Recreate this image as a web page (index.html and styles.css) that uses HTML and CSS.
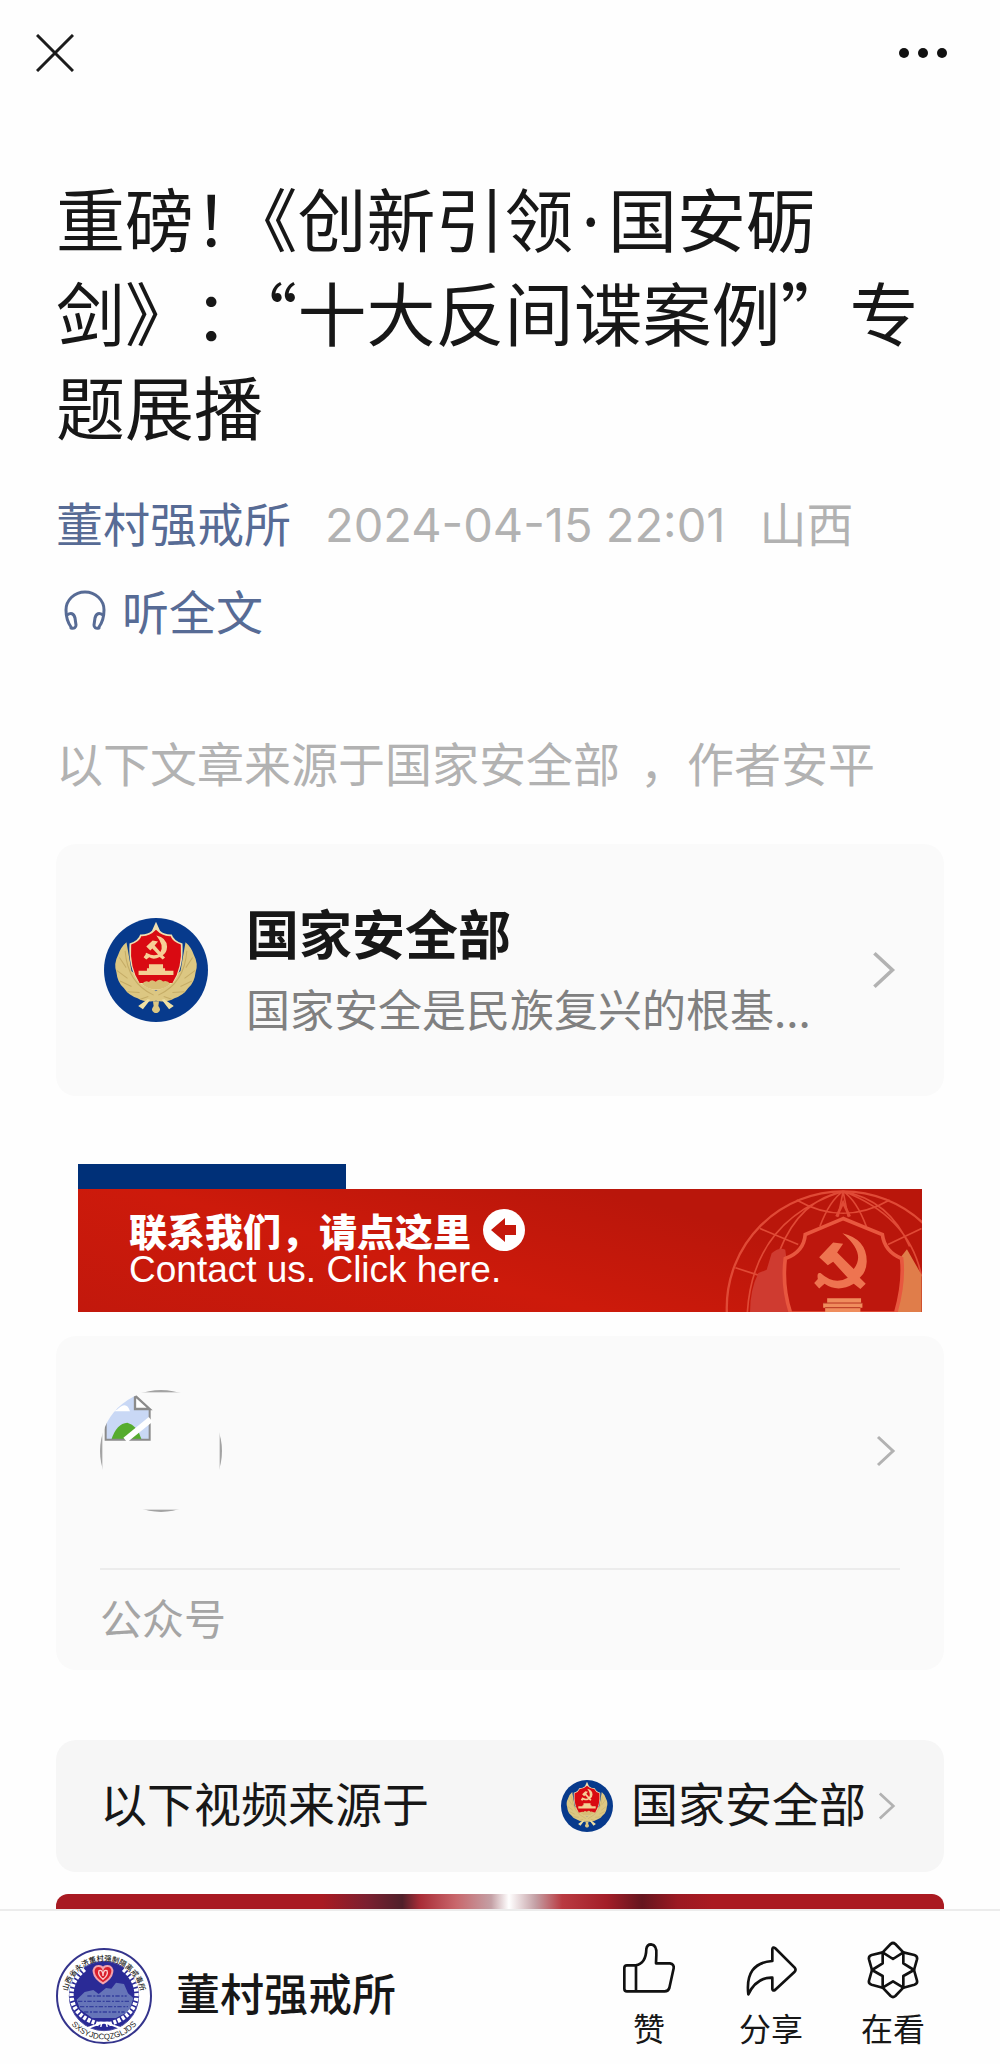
FILE: index.html
```html
<!DOCTYPE html>
<html lang="zh-CN">
<head>
<meta charset="utf-8">
<meta name="viewport" content="width=device-width, initial-scale=1">
<title>“十大反间谍案例”专题展播</title>
<link rel="stylesheet" href="styles.css">
</head>
<body>
<svg class="defs" aria-hidden="true">
  <defs>
    <path id="sickle" d="M198 94 Q229 100 230 128 Q229 147 217 153 L224 160 L217 166 L208 158 Q190 168 177 159 L168 166 L160 159 L166 151 Q166 143 171 147 Q187 157 203 151 L186 133 L180 139 L168 127 L187 109 L203 112 L193 124 L210 143 Q222 124 198 94Z"/>
    <symbol id="emblem" viewBox="42 42 310 310">
      <circle cx="197" cy="197" r="155" fill="#073a8c"/>
      <path d="M109 114 Q92 128 84 152 Q70 178 79 204 Q82 235 101 251 Q116 274 142 281 Q165 295 197 289 Q229 295 252 281 Q278 274 293 251 Q312 235 315 204 Q324 178 310 152 Q302 128 285 114 L270 200 L197 260 L124 200Z" fill="#dcc782"/>
      <path d="M88 160 L108 190 M80 198 L112 222 M90 230 L124 246 M112 262 L148 264 M150 284 L174 276 M306 160 L286 190 M314 198 L282 222 M304 230 L270 246 M282 262 L246 264 M244 284 L220 276 M105 140 Q112 236 190 272 M289 140 Q282 236 204 272" fill="none" stroke="#c5ac66" stroke-width="3"/>
      <path d="M180 286 L158 314 L144 304 L172 284Z M214 286 L236 314 L250 304 L222 284Z" fill="#efe0a4"/>
      <path d="M188 290 H206 L204 304 Q214 316 204 323 Q197 328 190 323 Q180 316 190 304Z" fill="#dcc782"/>
      <path d="M197 53 L209 80 Q222 92 244 91 Q250 110 276 118 Q280 190 250 232 Q230 250 197 258 Q164 250 144 232 Q114 190 118 118 Q144 110 150 91 Q172 92 185 80Z" fill="#f1dfb0"/>
      <path d="M197 77 Q216 97 240 96 Q248 115 271 121 Q276 190 246 236 H148 Q118 190 123 121 Q146 115 154 96 Q178 97 197 77Z" fill="#d90a12"/>
      <use href="#sickle" fill="#f7cf96"/>
      <path d="M176 180 H218 V192 H224 V199 H249 V212 H145 V199 H170 V192 H176Z" fill="#f3cf93"/>
      <path d="M155 239 Q165 226 176 233 Q184 222 196 232 Q208 220 218 231 Q230 226 240 239 Q220 256 197 255 Q174 256 155 239Z" fill="#d8bd75"/>
    </symbol>
    <symbol id="chevron" viewBox="0 0 20 32">
      <path d="M2 2 L17 16 L2 30" fill="none" stroke="#b2b2b2" stroke-width="3"/>
    </symbol>
  </defs>
</svg>

<div class="app">
  <header class="topbar">
    <button class="icon-btn" type="button" aria-label="关闭">
      <svg width="38" height="38" viewBox="0 0 38 38"><path d="M1 1 L37 37 M37 1 L1 37" stroke="#1c1c1c" stroke-width="3"/></svg>
    </button>
    <button class="icon-btn" type="button" aria-label="更多">
      <svg width="50" height="12" viewBox="0 0 50 12" fill="#111"><circle cx="6" cy="6" r="5"/><circle cx="25" cy="6" r="5"/><circle cx="44" cy="6" r="5"/></svg>
    </button>
  </header>

  <main class="article">
    <h1 class="title">重磅！<span class="half">《</span>创新引领<span class="dot">·</span>国安砺剑》：<span class="half">“</span>十大反间谍案例”专题展播</h1>

    <div class="meta">
      <a class="account" href="#account">董村强戒所</a>
      <time class="date" datetime="2024-04-15T22:01">2024-04-15 22:01</time>
      <span>山西</span>
    </div>

    <button class="listen" type="button">
      <svg width="42" height="42" viewBox="0 0 42 42" fill="none" stroke="#576b95" stroke-width="3" stroke-linecap="round" stroke-linejoin="round">
        <path d="M7 38 Q2 31 2 21 A19 18 0 0 1 40 21 Q40 31 35 38"/>
        <path d="M3 26 Q9 22 11 29 L12 36 Q12 40 7 39 M39 26 Q33 22 31 29 L30 36 Q30 40 35 39"/>
      </svg>
      <span>听全文</span>
    </button>

    <p class="origin"><span class="origin-name">以下文章来源于国家安全部</span>，作者安平</p>

    <a class="card profile" href="#profile">
      <svg class="profile-logo"><use href="#emblem"/></svg>
      <span class="profile-text">
        <strong class="profile-name">国家安全部</strong>
        <span class="profile-desc">国家安全是民族复兴的根基...</span>
      </span>
      <svg class="chevron chevron-lg"><use href="#chevron"/></svg>
    </a>

    <a class="banner" href="#contact">
      <span class="banner-tab"></span>
      <span class="banner-body">
        <span class="banner-text">
          <span class="banner-zh">联系我们，请点这里
            <svg width="42" height="42" viewBox="0 0 42 42"><circle cx="21" cy="21" r="21" fill="#fff"/><path d="M8 21 L22 9 V16 H33 V26 H22 V33Z" fill="#c5180c"/></svg>
          </span>
          <span class="banner-en">Contact us. Click here.</span>
        </span>
        <svg class="banner-art" viewBox="676 117 590 370" fill="none" stroke="#e04a36" stroke-width="7">
          <circle cx="1030" cy="474" r="350"/>
          <path d="M1030 124 Q760 210 742 487 M1030 124 Q900 150 840 300 M1030 124 Q990 150 960 230 M1030 124 L1015 200 M1030 124 L1045 200 M1030 124 Q1070 150 1100 230 M1030 124 Q1170 150 1230 290 M1030 124 Q1230 200 1266 380 M890 150 Q1030 230 1170 150 M780 236 L895 284 M706 354 L775 376 M1165 284 L1266 236" stroke-width="5"/>
          <path d="M860 330 L858 400 L876 487 H750 Q750 420 775 370 L800 360 L815 310 Q840 290 856 300Z" fill="#cf3b30" stroke="none"/>
          <path d="M1205 320 L1222 298 L1240 330 L1266 375 V487 H1184 Q1212 410 1205 320Z" fill="#e07d4a" stroke="none"/>
          <path d="M1030 206 L916 254 Q912 306 856 326 Q846 410 872 490 H1188 Q1214 400 1206 326 Q1155 306 1148 254Z" fill="#bd170d" stroke="#e8573f" stroke-width="11"/>
          <path d="M1010 200 L1030 158 L1050 200" stroke-width="8"/>
          <path d="M1028 250 Q1102 268 1101 336 Q1100 368 1080 384 L1098 402 L1082 418 L1062 402 Q1015 430 974 402 L958 416 L943 400 L954 388 Q950 366 962 370 Q1004 408 1044 384 L1000 336 L984 346 L958 322 L1000 278 L1030 282 L1012 308 L1062 358 Q1100 310 1028 250Z" fill="#ee7450" stroke="none"/>
          <path d="M982 446 H1084 V460 H1088 V474 H1082 V487 H976 V474 H970 V460 H982Z" fill="#ef8d5d" stroke="none"/>
          <path d="M970 460 H1088 M976 474 H1082" stroke="#b83320" stroke-width="3"/>
        </svg>
      </span>
    </a>

    <a class="card account-card" href="#official" aria-label="公众号">
      <span class="account-row">
        <svg width="122" height="122" viewBox="0 0 366 366">
          <defs><clipPath id="avatar-clip"><circle cx="183" cy="183" r="183"/></clipPath></defs>
          <g clip-path="url(#avatar-clip)">
            <rect x="2" y="2" width="362" height="362" fill="none" stroke="#a3a3a3" stroke-width="10"/>
            <path d="M17 17 H105 L149 58 V149 H17Z" fill="#c9d8f5"/>
            <path d="M17 60 Q40 50 50 60 Q80 30 90 64 H17Z" fill="#fff"/>
            <path d="M34 149 Q50 100 82 98 Q112 105 125 149Z" fill="#56ac2e"/>
            <path d="M17 17 V149 H149 V58" fill="none" stroke="#8b8b8b" stroke-width="6"/>
            <path d="M105 17 V57 H149 L105 17" fill="#fff" stroke="#8b8b8b" stroke-width="7"/>
            <path d="M76 150 L152 88" stroke="#fff" stroke-width="18"/>
          </g>
        </svg>
        <svg class="chevron"><use href="#chevron"/></svg>
      </span>
      <span class="account-kind">公众号</span>
    </a>

    <a class="card video-source" href="#video-source">
      <span class="video-label">以下视频来源于</span>
      <span class="video-owner">
        <svg class="video-logo"><use href="#emblem"/></svg>
        <span class="video-label">国家安全部</span>
        <svg class="chevron chevron-sm"><use href="#chevron"/></svg>
      </span>
    </a>

    <div class="video"></div>
  </main>

  <footer class="bottombar">
    <a class="publisher" href="#publisher">
      <svg width="96" height="96" viewBox="0 0 288 288">
        <defs>
          <path id="ring-top" d="M33 150 A111 111 0 0 1 255 150"/>
          <path id="ring-bottom" d="M14 144 A130 130 0 0 0 274 144"/>
        </defs>
        <circle cx="144" cy="144" r="141" fill="#fff" stroke="#34348c" stroke-width="6"/>
        <circle cx="144" cy="144" r="104" fill="#2a2a96" stroke="#4a4aa0" stroke-width="3"/>
        <path d="M62 155 L86 132 L112 126 L128 138 L150 120 L166 122 L180 104 L204 108 L216 136 L232 150 L220 190 L180 210 H108 L72 184Z" fill="#6675b8"/>
        <path d="M66 160 H224 M72 176 H216 M84 192 H206 M94 144 H212" stroke="#343f9d" stroke-width="4" stroke-dasharray="13 5 6 4"/>
        <path d="M86 64 Q42 100 47 150 Q56 210 138 231 M202 64 Q246 100 241 150 Q232 210 150 231" fill="none" stroke="#fff" stroke-width="13" stroke-dasharray="9 5"/>
        <path d="M96 240 Q144 220 160 224 M192 240 Q144 220 128 224" fill="none" stroke="#fff" stroke-width="6"/>
        <path d="M141 106 C106 86 106 54 128 54 Q138 54 141 62 Q144 54 154 54 C176 54 176 86 141 106Z" fill="#d9202c" stroke="#f3a3ae" stroke-width="6"/>
        <path d="M141 94 Q124 80 129 68 Q141 64 141 84 Q141 64 153 68 Q158 80 141 94Z" fill="none" stroke="#fbd0d0" stroke-width="4"/>
        <text class="seal-zh"><textPath href="#ring-top" startOffset="50%">山西省永济董村强制隔离戒毒所</textPath></text>
        <text class="seal-en"><textPath href="#ring-bottom" startOffset="50%">SXSYJDCQZGLJDS</textPath></text>
      </svg>
      <span class="publisher-name">董村强戒所</span>
    </a>
    <nav class="actions">
      <button class="action" type="button">
        <svg width="58" height="58" viewBox="0 0 174 174" fill="none" stroke="#111" stroke-width="8" stroke-linejoin="round">
          <path d="M13 81 Q13 73 21 73 H47 Q78 68 79 24 Q81 10 93 10 Q112 12 109 42 L108 67 H150 Q163 69 161 82 L148 141 Q145 151 134 151 H21 Q13 151 13 143Z M48 73 V151"/>
        </svg>
        <span>赞</span>
      </button>
      <button class="action" type="button">
        <svg width="58" height="58" viewBox="0 0 174 174" fill="none" stroke="#111" stroke-width="8" stroke-linejoin="round">
          <path d="M91 24 Q93 17 99 21 L158 80 Q163 86 158 92 L99 147 Q92 151 91 144 V110 Q44 108 19 160 Q8 66 91 60Z"/>
        </svg>
        <span>分享</span>
      </button>
      <button class="action" type="button">
        <svg width="58" height="58" viewBox="0 0 174 174" fill="none" stroke="#111" stroke-width="8" stroke-linejoin="round">
          <path d="M80 9 Q87 3 94 9 L118 34 L151 42 Q161 45 159 55 L150 87 L159 119 Q161 128 151 131 L118 140 L94 165 Q87 171 80 165 L56 140 L23 131 Q13 128 15 119 L24 87 L15 55 Q13 45 23 42 L56 34Z"/>
          <path d="M56 34 L87 54 L118 34 V67 L150 87 L118 105 V140 L87 121 L56 140 V105 L24 87 L56 67Z"/>
        </svg>
        <span>在看</span>
      </button>
    </nav>
  </footer>
</div>
</body>
</html>
```
FILE: styles.css
```css
* {
  box-sizing: border-box;
}

body {
  margin: 0;
  background: #fefefe;
  color: #171717;
  font-family: "Noto Sans CJK SC", "Noto Sans", sans-serif;
}

a {
  color: inherit;
  text-decoration: none;
}

button {
  padding: 0;
  border: 0;
  background: none;
  color: inherit;
  font: inherit;
}

svg {
  display: block;
  flex: none;
}

.defs {
  position: absolute;
  width: 0;
  height: 0;
}

.app {
  display: flex;
  flex-direction: column;
  min-height: 100vh;
}

.topbar {
  display: flex;
  align-items: center;
  justify-content: space-between;
  height: 106px;
  padding: 0 52px 0 36px;
}

.article {
  display: flex;
  flex: 1;
  flex-direction: column;
  padding: 64px 56px 0;
}

.title {
  margin: 0;
  font-size: 69px;
  font-weight: 400;
  line-height: 94px;
  text-spacing-trim: space-all;
}

.half {
  font-feature-settings: "halt";
}

.dot {
  margin: 0 8px;
  font-family: "Noto Sans", sans-serif;
  line-height: 0;
}

.meta {
  display: flex;
  align-items: baseline;
  gap: 34px;
  margin-top: 34px;
  color: #b2b2b2;
  font-size: 47px;
  line-height: 72px;
}

.account,
.listen {
  color: #576b95;
}

.date {
  font-family: Inter, sans-serif;
  line-height: 48px;
}

.listen {
  display: flex;
  align-items: center;
  align-self: flex-start;
  gap: 16px;
  margin-top: 16px;
  padding-left: 8px;
  font-size: 47px;
  line-height: 72px;
}

.origin {
  margin: 80px 0 0;
  color: #b2b2b2;
  font-size: 47px;
  line-height: 72px;
}

.origin-name {
  margin-right: 20px;
}

.card {
  border-radius: 20px;
  background: #fafafa;
}

.chevron {
  width: 20px;
  height: 32px;
}

.chevron-lg {
  width: 24px;
  height: 40px;
}

.chevron-sm {
  width: 18px;
  height: 30px;
}

.profile {
  display: flex;
  align-items: center;
  height: 252px;
  margin-top: 46px;
  padding: 0 48px;
}

.profile-logo {
  width: 104px;
  height: 104px;
}

.profile-text {
  display: flex;
  flex: 1;
  flex-direction: column;
  gap: 12px;
  min-width: 0;
  padding: 0 38px;
}

.profile-name {
  font-size: 53px;
  font-weight: 700;
  line-height: 64px;
}

.profile-desc {
  color: #808080;
  font-size: 44px;
  line-height: 64px;
}

.banner {
  display: block;
  margin: 68px 22px 0;
  color: #fff;
}

.banner-tab {
  display: block;
  width: 268px;
  height: 25px;
  background: #003078;
}

.banner-body {
  display: flex;
  justify-content: space-between;
  height: 123px;
  background: linear-gradient(15deg, #c2180c, #cd1a0b 40%, #b9160b 75%);
}

.banner-text {
  display: flex;
  flex-direction: column;
  padding: 20px 0 0 51px;
}

.banner-zh {
  display: flex;
  align-items: center;
  gap: 12px;
  font-size: 38px;
  font-weight: 900;
  line-height: 42px;
}

.banner-en {
  font-family: "Liberation Sans", Arial, sans-serif;
  font-size: 37px;
  line-height: 38px;
}

.banner-art {
  width: 197px;
  height: 123px;
}

.account-card {
  display: block;
  margin-top: 24px;
  padding: 54px 44px 0;
}

.account-row {
  display: flex;
  align-items: center;
  justify-content: space-between;
  padding: 0 4px 56px 0;
  border-bottom: 2px solid #ececec;
}

.account-kind {
  display: block;
  height: 100px;
  color: #a5a5a5;
  font-size: 42px;
  line-height: 94px;
}

.video-source {
  display: flex;
  align-items: center;
  justify-content: space-between;
  height: 132px;
  margin-top: 70px;
  padding: 0 48px 0 44px;
  background: #f6f6f6;
  font-size: 47px;
  line-height: 64px;
}

.video-label {
  padding-bottom: 8px;
}

.video-owner {
  display: flex;
  align-items: center;
}

.video-logo {
  width: 52px;
  height: 52px;
  margin-right: 18px;
}

.video-owner .chevron {
  margin-left: 12px;
}

.video {
  flex: 1;
  min-height: 15px;
  margin-top: 22px;
  border-radius: 12px 12px 0 0;
  background: linear-gradient(90deg, #a81a22 0 30%, #7b2030 35%, #50202a 39%, #a92d37 41%, #c8666b 45%, #c4a0a5 49%, #fff 51%, #c4a0a5 54%, #b93a41 57%, #a31e28 62%, #65151e 66%, #9b1922 70%, #aa1a21 74%);
}

.bottombar {
  display: flex;
  align-items: flex-start;
  justify-content: space-between;
  height: 155px;
  padding: 0 46px 0 56px;
  border-top: 2px solid #ececec;
}

.publisher {
  display: flex;
  align-items: center;
  gap: 24px;
  padding-top: 37px;
  font-size: 44px;
  font-weight: 500;
  line-height: 64px;
}

.publisher-name {
  padding-bottom: 8px;
}

.actions {
  display: flex;
}

.action {
  display: flex;
  flex-direction: column;
  align-items: center;
  width: 122px;
  padding-top: 30px;
  font-size: 32px;
  line-height: 48px;
}

.action svg {
  margin-bottom: 4px;
}

.seal-zh,
.seal-en {
  fill: #222;
  text-anchor: middle;
}

.seal-zh {
  font-size: 22px;
}

.seal-en {
  font-family: "Liberation Sans", Arial, sans-serif;
  font-size: 24px;
}
```
